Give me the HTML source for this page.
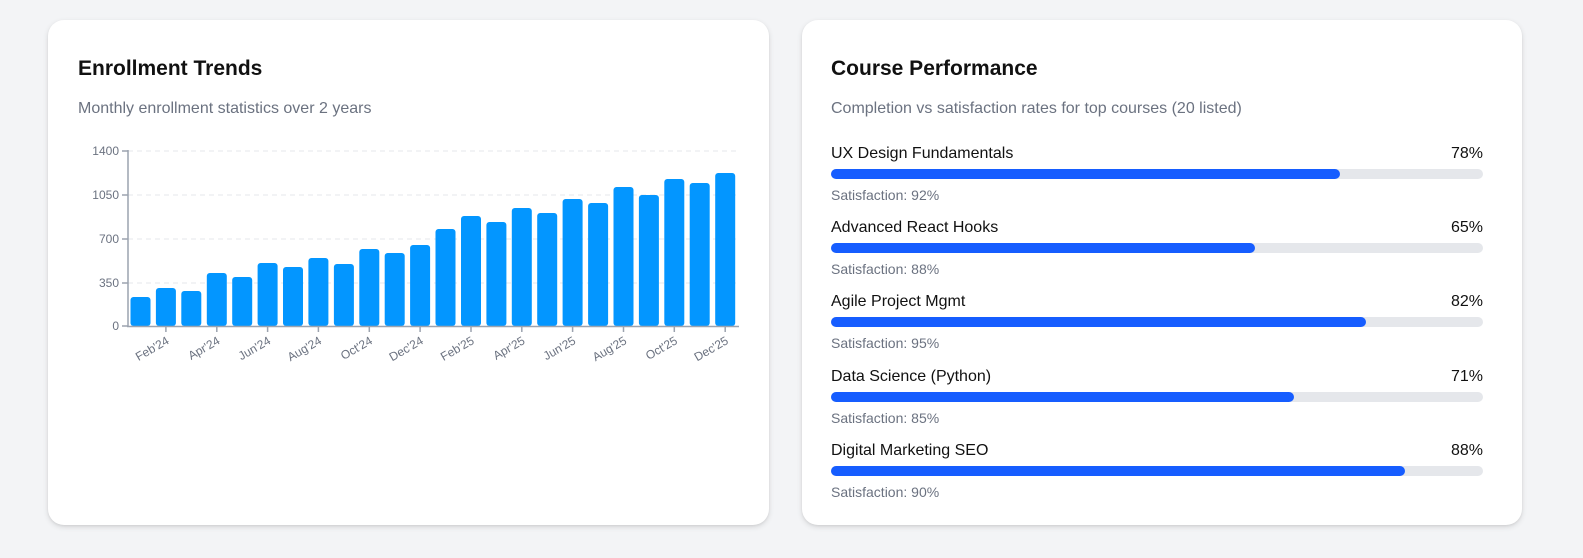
<!DOCTYPE html>
<html><head><meta charset="utf-8">
<style>
*{box-sizing:border-box;margin:0;padding:0}
body{width:1583px;height:558px;background:#f3f4f6;font-family:"Liberation Sans",sans-serif;position:relative;overflow:hidden}
.card{position:absolute;top:20px;height:505px;background:#fff;border-radius:16px;box-shadow:0 2px 6px rgba(0,0,0,.12),0 1px 2px rgba(0,0,0,.06)}
h2{position:absolute;left:30px;top:37px;font-size:21px;font-weight:600;color:#111}
.sub{position:absolute;left:30px;top:80px;font-size:16px;color:#6b7280}
.row{position:absolute;left:29px;width:652px}
.name{position:absolute;left:0;top:2px;font-size:16px;color:#111}
.pct{position:absolute;right:0;top:2px;font-size:16px;color:#111}
.track{position:absolute;left:0;top:26px;width:652px;height:10px;background:#e5e7eb;border-radius:5px}
.fill{height:10px;background:#165dff;border-radius:5px}
.sat{position:absolute;left:0;top:44px;font-size:14px;color:#6b7280}
</style></head><body>
<div class="card" style="left:48px;width:721px">
<h2>Enrollment Trends</h2>
<div class="sub">Monthly enrollment statistics over 2 years</div>
</div>
<svg style="position:absolute;left:0;top:0" width="800" height="400" font-family="Liberation Sans, sans-serif">
<g stroke="#e5e7eb" stroke-dasharray="5,4">
<line x1="128" y1="151" x2="738" y2="151"/><line x1="128" y1="195" x2="738" y2="195"/><line x1="128" y1="239" x2="738" y2="239"/><line x1="128" y1="283" x2="738" y2="283"/>
</g>
<g fill="#0396ff">
<rect x="130.5" y="297" width="20" height="29" rx="3"/>
<rect x="155.9" y="288" width="20" height="38" rx="3"/>
<rect x="181.3" y="291" width="20" height="35" rx="3"/>
<rect x="206.8" y="273" width="20" height="53" rx="3"/>
<rect x="232.2" y="277" width="20" height="49" rx="3"/>
<rect x="257.6" y="263" width="20" height="63" rx="3"/>
<rect x="283.0" y="267" width="20" height="59" rx="3"/>
<rect x="308.4" y="258" width="20" height="68" rx="3"/>
<rect x="333.9" y="264" width="20" height="62" rx="3"/>
<rect x="359.3" y="249" width="20" height="77" rx="3"/>
<rect x="384.7" y="253" width="20" height="73" rx="3"/>
<rect x="410.1" y="245" width="20" height="81" rx="3"/>
<rect x="435.5" y="229" width="20" height="97" rx="3"/>
<rect x="461.0" y="216" width="20" height="110" rx="3"/>
<rect x="486.4" y="222" width="20" height="104" rx="3"/>
<rect x="511.8" y="208" width="20" height="118" rx="3"/>
<rect x="537.2" y="213" width="20" height="113" rx="3"/>
<rect x="562.6" y="199" width="20" height="127" rx="3"/>
<rect x="588.1" y="203" width="20" height="123" rx="3"/>
<rect x="613.5" y="187" width="20" height="139" rx="3"/>
<rect x="638.9" y="195" width="20" height="131" rx="3"/>
<rect x="664.3" y="179" width="20" height="147" rx="3"/>
<rect x="689.7" y="183" width="20" height="143" rx="3"/>
<rect x="715.2" y="173" width="20" height="153" rx="3"/>
</g>
<g stroke="#9ca3af" stroke-width="1.5">
<line x1="128" y1="150" x2="128" y2="327"/><line x1="127" y1="326.5" x2="739" y2="326.5"/>
<line x1="122" y1="151" x2="128" y2="151"/><line x1="122" y1="195" x2="128" y2="195"/><line x1="122" y1="239" x2="128" y2="239"/><line x1="122" y1="283" x2="128" y2="283"/><line x1="122" y1="326" x2="128" y2="326"/>
<line x1="165.9" y1="326" x2="165.9" y2="332"/><line x1="216.8" y1="326" x2="216.8" y2="332"/><line x1="267.6" y1="326" x2="267.6" y2="332"/><line x1="318.4" y1="326" x2="318.4" y2="332"/><line x1="369.3" y1="326" x2="369.3" y2="332"/><line x1="420.1" y1="326" x2="420.1" y2="332"/><line x1="471" y1="326" x2="471" y2="332"/><line x1="521.8" y1="326" x2="521.8" y2="332"/><line x1="572.6" y1="326" x2="572.6" y2="332"/><line x1="623.5" y1="326" x2="623.5" y2="332"/><line x1="674.3" y1="326" x2="674.3" y2="332"/><line x1="725.2" y1="326" x2="725.2" y2="332"/>
</g>
<g fill="#6b7280" font-size="12" text-anchor="end">
<text x="119" y="155">1400</text><text x="119" y="199">1050</text><text x="119" y="243">700</text><text x="119" y="287">350</text><text x="119" y="330">0</text>
</g>
<g fill="#6b7280" font-size="12" text-anchor="end">
<text transform="translate(169.9,343) rotate(-30)">Feb'24</text>
<text transform="translate(220.8,343) rotate(-30)">Apr'24</text>
<text transform="translate(271.6,343) rotate(-30)">Jun'24</text>
<text transform="translate(322.4,343) rotate(-30)">Aug'24</text>
<text transform="translate(373.3,343) rotate(-30)">Oct'24</text>
<text transform="translate(424.1,343) rotate(-30)">Dec'24</text>
<text transform="translate(475,343) rotate(-30)">Feb'25</text>
<text transform="translate(525.8,343) rotate(-30)">Apr'25</text>
<text transform="translate(576.6,343) rotate(-30)">Jun'25</text>
<text transform="translate(627.5,343) rotate(-30)">Aug'25</text>
<text transform="translate(678.3,343) rotate(-30)">Oct'25</text>
<text transform="translate(729.2,343) rotate(-30)">Dec'25</text>
</g>
</svg>
<div class="card" style="left:802px;width:720px">
<h2 style="left:29px">Course Performance</h2>
<div class="sub" style="left:29px">Completion vs satisfaction rates for top courses (20 listed)</div>
<div class="row" style="top:123px"><div class="name">UX Design Fundamentals</div><div class="pct">78%</div><div class="track"><div class="fill" style="width:78%"></div></div><div class="sat">Satisfaction: 92%</div></div>
<div class="row" style="top:197px"><div class="name">Advanced React Hooks</div><div class="pct">65%</div><div class="track"><div class="fill" style="width:65%"></div></div><div class="sat">Satisfaction: 88%</div></div>
<div class="row" style="top:271px"><div class="name">Agile Project Mgmt</div><div class="pct">82%</div><div class="track"><div class="fill" style="width:82%"></div></div><div class="sat">Satisfaction: 95%</div></div>
<div class="row" style="top:346px"><div class="name">Data Science (Python)</div><div class="pct">71%</div><div class="track"><div class="fill" style="width:71%"></div></div><div class="sat">Satisfaction: 85%</div></div>
<div class="row" style="top:420px"><div class="name">Digital Marketing SEO</div><div class="pct">88%</div><div class="track"><div class="fill" style="width:88%"></div></div><div class="sat">Satisfaction: 90%</div></div>
</div>
</body></html>
